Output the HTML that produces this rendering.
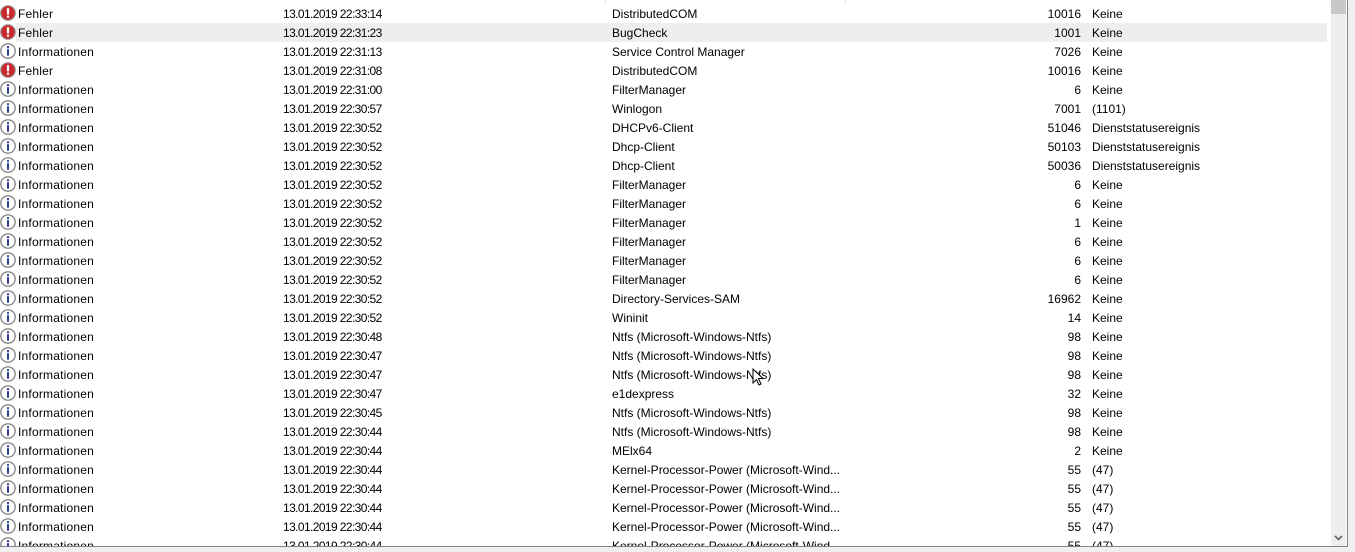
<!DOCTYPE html>
<html><head><meta charset="utf-8"><style>
body{margin:0;width:1355px;height:552px;background:#fff;overflow:hidden;position:relative;font-family:"Liberation Sans",sans-serif;font-size:12px;color:#000}
#list{position:absolute;left:0;top:0;width:1330px;height:546px;overflow:hidden}
.hl{position:absolute;left:16px;top:23px;width:1311px;height:19px;background:#eeeeee}
.r{position:absolute;left:0;width:1330px;height:19px;line-height:19px;white-space:nowrap}
.r span{position:absolute}
.ic{position:absolute;left:0;top:0px;width:16px;height:16px}
.l{left:18px;letter-spacing:0.2px}.d{left:283px;letter-spacing:-0.6px}.s{left:612px}.n{right:249px;text-align:right}.c{left:1092px}
.sb{position:absolute;left:1331px;top:0;width:15px;height:546px;background:#eeeeee}
.th{position:absolute;left:1331px;top:0;width:15px;height:14px;background:#c8c8c8}
</style></head><body>
<svg width="0" height="0" style="position:absolute"><defs>
<g id="err"><circle cx="8" cy="8" r="7.3" fill="#c9282d" stroke="#9a9a9a" stroke-width="1.2"/><rect x="6.9" y="3.2" width="2.2" height="6.2" fill="#fff"/><rect x="6.9" y="10.6" width="2.2" height="2.1" fill="#fff"/></g>
<g id="inf"><circle cx="8" cy="8" r="7.2" fill="#fff" stroke="#8a8a8a" stroke-width="1.4"/><rect x="7" y="3.2" width="2" height="2" fill="#2e3f8a"/><rect x="7" y="6.2" width="2" height="6.5" fill="#2e3f8a"/></g>
</defs></svg>
<div id="list"><div class="hl"></div></div>
<div style="position:absolute;left:605px;top:0;width:1px;height:4px;background:#e5e5e5"></div>
<div style="position:absolute;left:845px;top:0;width:1px;height:4px;background:#e5e5e5"></div>
<svg style="position:absolute;left:752px;top:368px" width="12" height="19"><path d="M1 1 L1 15 L4.5 11.5 L7 17 L9 16 L6.5 10.5 L11 10.5 Z" fill="#fff" stroke="#000" stroke-width="1"/></svg>
<div class="sb"></div><div class="th"></div>
<svg style="position:absolute;left:1334px;top:535px" width="9" height="6"><path d="M1 1 L4.5 4.5 L8 1" stroke="#606060" stroke-width="1.6" fill="none"/></svg>
<div style="position:absolute;left:1347px;top:0;width:1px;height:547px;background:#828282"></div>
<div style="position:absolute;left:0;top:546px;width:1348px;height:1px;background:#828282"></div>
<div style="position:absolute;left:0;top:547px;width:1355px;height:5px;background:#f0f0f0"></div>
<div style="position:absolute;left:1348px;top:0;width:7px;height:552px;background:#f0f0f0"></div>
<script>
var rows=[
["e","Fehler","13.01.2019 22:33:14","DistributedCOM","10016","Keine"],
["e","Fehler","13.01.2019 22:31:23","BugCheck","1001","Keine"],
["i","Informationen","13.01.2019 22:31:13","Service Control Manager","7026","Keine"],
["e","Fehler","13.01.2019 22:31:08","DistributedCOM","10016","Keine"],
["i","Informationen","13.01.2019 22:31:00","FilterManager","6","Keine"],
["i","Informationen","13.01.2019 22:30:57","Winlogon","7001","(1101)"],
["i","Informationen","13.01.2019 22:30:52","DHCPv6-Client","51046","Dienststatusereignis"],
["i","Informationen","13.01.2019 22:30:52","Dhcp-Client","50103","Dienststatusereignis"],
["i","Informationen","13.01.2019 22:30:52","Dhcp-Client","50036","Dienststatusereignis"],
["i","Informationen","13.01.2019 22:30:52","FilterManager","6","Keine"],
["i","Informationen","13.01.2019 22:30:52","FilterManager","6","Keine"],
["i","Informationen","13.01.2019 22:30:52","FilterManager","1","Keine"],
["i","Informationen","13.01.2019 22:30:52","FilterManager","6","Keine"],
["i","Informationen","13.01.2019 22:30:52","FilterManager","6","Keine"],
["i","Informationen","13.01.2019 22:30:52","FilterManager","6","Keine"],
["i","Informationen","13.01.2019 22:30:52","Directory-Services-SAM","16962","Keine"],
["i","Informationen","13.01.2019 22:30:52","Wininit","14","Keine"],
["i","Informationen","13.01.2019 22:30:48","Ntfs (Microsoft-Windows-Ntfs)","98","Keine"],
["i","Informationen","13.01.2019 22:30:47","Ntfs (Microsoft-Windows-Ntfs)","98","Keine"],
["i","Informationen","13.01.2019 22:30:47","Ntfs (Microsoft-Windows-Ntfs)","98","Keine"],
["i","Informationen","13.01.2019 22:30:47","e1dexpress","32","Keine"],
["i","Informationen","13.01.2019 22:30:45","Ntfs (Microsoft-Windows-Ntfs)","98","Keine"],
["i","Informationen","13.01.2019 22:30:44","Ntfs (Microsoft-Windows-Ntfs)","98","Keine"],
["i","Informationen","13.01.2019 22:30:44","MElx64","2","Keine"],
["i","Informationen","13.01.2019 22:30:44","Kernel-Processor-Power (Microsoft-Wind...","55","(47)"],
["i","Informationen","13.01.2019 22:30:44","Kernel-Processor-Power (Microsoft-Wind...","55","(47)"],
["i","Informationen","13.01.2019 22:30:44","Kernel-Processor-Power (Microsoft-Wind...","55","(47)"],
["i","Informationen","13.01.2019 22:30:44","Kernel-Processor-Power (Microsoft-Wind...","55","(47)"],
["i","Informationen","13.01.2019 22:30:44","Kernel-Processor-Power (Microsoft-Wind...","55","(47)"]];
var h="";
rows.forEach(function(r,i){
 h+='<div class="r" style="top:'+(5+i*19)+'px">'+
 '<svg class="ic" width="16" height="16"><use href="#'+(r[0]=="e"?"err":"inf")+'"/></svg>'+
 '<span class="l">'+r[1]+'</span><span class="d">'+r[2]+'</span><span class="s">'+r[3]+'</span><span class="n">'+r[4]+'</span><span class="c">'+r[5]+'</span></div>';
});
document.getElementById("list").insertAdjacentHTML("beforeend",h);
</script>
</body></html>
